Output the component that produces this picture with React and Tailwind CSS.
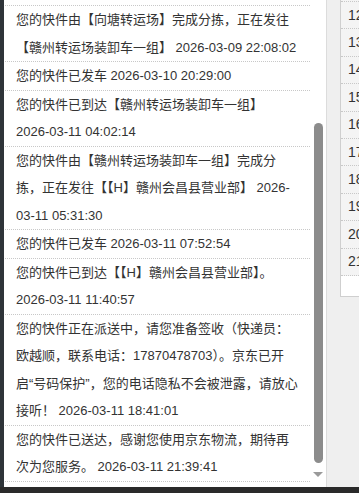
import React from 'react';

const items = [
  '您的快件由【向塘转运场】完成分拣，正在发往【赣州转运场装卸车一组】 2026-03-09 22:08:02',
  '您的快件已发车 2026-03-10 20:29:00',
  '您的快件已到达【赣州转运场装卸车一组】 2026-03-11 04:02:14',
  '您的快件由【赣州转运场装卸车一组】完成分拣，正在发往【【H】赣州会昌县营业部】 2026-03-11 05:31:30',
  '您的快件已发车 2026-03-11 07:52:54',
  '您的快件已到达【【H】赣州会昌县营业部】。 2026-03-11 11:40:57',
  '您的快件正在派送中，请您准备签收（快递员：欧越顺，联系电话：17870478703）。京东已开启“号码保护”，您的电话隐私不会被泄露，请放心接听！ 2026-03-11 18:41:01',
  '您的快件已送达，感谢您使用京东物流，期待再次为您服务。 2026-03-11 21:39:41',
];

const days = [12, 13, 14, 15, 16, 17, 18, 19, 20, 21];

export default function App() {
  return (
    <div
      className="w-[359px] h-[493px] overflow-hidden flex flex-col bg-[#efefef]"
      style={{ fontFamily: '"Liberation Sans", "Noto Sans CJK SC", sans-serif' }}
    >
      <div className="flex flex-1 min-h-0">
        {/* dark edge */}
        <div className="w-[4px] shrink-0 bg-[#2e3439]" />

        {/* track list panel */}
        <div className="w-[323px] shrink-0 flex bg-white border-r border-[#dcdcdc]">
          <div className="w-[305px] ml-[1px] shrink-0 text-[13px] leading-[27.5px] text-[#333]">
            <div className="h-[6px] border-b border-dotted border-[#c8c8c8]" />
            {items.map((t, i) => (
              <div key={i} className="pl-[11px] pr-[11px] border-b border-dotted border-[#c8c8c8]">
                {t}
              </div>
            ))}
          </div>
          <div className="flex-1 flex flex-col items-center pt-[123px]">
            <div className="w-[9px] h-[340px] rounded-full bg-[#8c8c8c]" />
            <div className="mt-[9px] w-0 h-0 border-l-[5px] border-r-[5px] border-t-[5px] border-l-transparent border-r-transparent border-t-[#9a9a9a]" />
          </div>
        </div>

        {/* gap */}
        <div className="w-[13px] shrink-0" />

        {/* calendar column */}
        <div className="flex-1 min-w-0 self-start overflow-hidden">
          <div className="h-[297px] bg-white border-l border-b border-[#cfcfcf] flex flex-col">
            <div className="h-[2px] border-b border-dotted border-[#c8c8c8] bg-[#f4f4f4]" />
            {days.map((d) => (
              <div
                key={d}
                className="h-[27.4px] bg-[#f4f4f4] border-b border-dotted border-[#c8c8c8] pl-[7px] flex items-center text-[14px] text-[#333] whitespace-nowrap"
              >
                {d}
              </div>
            ))}
          </div>
        </div>
      </div>
      <div className="h-[6px] shrink-0 bg-[#2a2a2a]" />
    </div>
  );
}
